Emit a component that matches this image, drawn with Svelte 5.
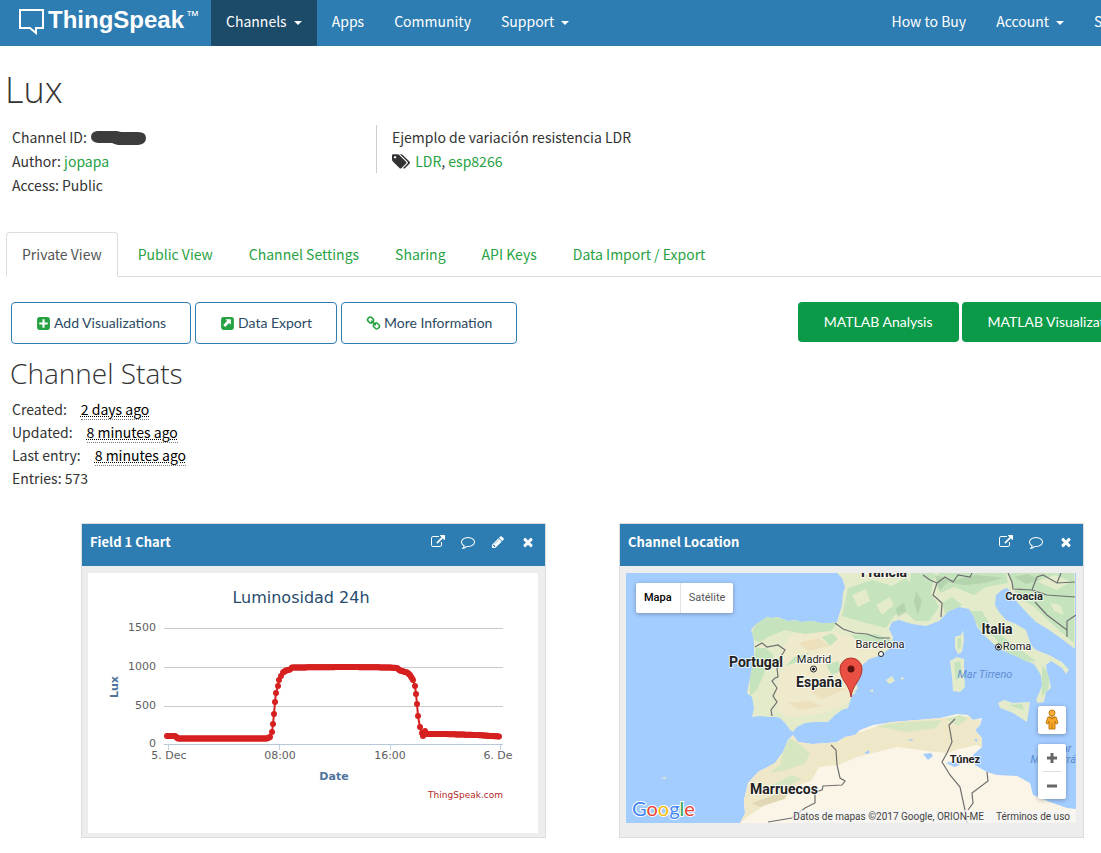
<script>
  const icons = {
    external: 'M1408 928v320q0 119-84.5 203.5t-203.5 84.5h-832q-119 0-203.5-84.5t-84.5-203.5v-832q0-119 84.5-203.5t203.5-84.5h704q14 0 23 9t9 23v64q0 14-9 23t-23 9h-704q-66 0-113 47t-47 113v832q0 66 47 113t113 47h832q66 0 113-47t47-113v-320q0-14 9-23t23-9h64q14 0 23 9t9 23zm384-864v512q0 26-19 45t-45 19-45-19l-176-176-652 652q-10 10-23 10t-23-10l-114-114q-10-10-10-23t10-23l652-652-176-176q-19-19-19-45t19-45 45-19h512q26 0 45 19t19 45z',
    comment: 'M896 384q-204 0-381.5 69.5t-282 187.5-104.5 255q0 112 71.5 213.5t201.5 175.5l87 50-27 96q-24 91-70 172 152-63 275-171l43-38 57 6q69 8 130 8 204 0 381.5-69.5t282-187.5 104.5-255-104.5-255-282-187.5-381.5-69.5zm896 512q0 174-120 321.5t-326 233-450 85.5q-70 0-145-8-198 175-460 242-49 14-114 22h-5q-15 0-27-10.5t-16-27.5v-1q-3-4-.5-12t2-10 4.5-9.5l6-9 7-8.5 8-9q7-8 31-34.5t34.5-38 31-39.5 32.5-51 27-59 26-76q-157-89-247.5-220t-90.5-281q0-174 120-321.5t326-233 450-85.5 450 85.5 326 233 120 321.5z',
    pencil: 'M491 1536l91-91-235-235-91 91v107h128v128h107zm523-928q0-22-22-22-10 0-17 7l-542 542q-7 7-7 17 0 22 22 22 10 0 17-7l542-542q7-7 7-17zm-54-192l416 416-832 832h-416v-416zm683 96q0 53-37 90l-166 166-416-416 166-165q36-38 90-38 53 0 91 38l235 234q37 39 37 91z',
    times: 'M1490 1322q0 40-28 68l-136 136q-28 28-68 28t-68-28l-294-294-294 294q-28 28-68 28t-68-28l-136-136q-28-28-28-68t28-68l294-294-294-294q-28-28-28-68t28-68l136-136q28-28 68-28t68 28l294 294 294-294q28-28 68-28t68 28l136 136q28 28 28 68t-28 68l-294 294 294 294q28 28 28 68z',
    plus: 'M1408 960v-128q0-26-19-45t-45-19h-320v-320q0-26-19-45t-45-19h-128q-26 0-45 19t-19 45v320h-320q-26 0-45 19t-19 45v128q0 26 19 45t45 19h320v320q0 26 19 45t45 19h128q26 0 45-19t19-45v-320h320q26 0 45-19t19-45zm256-544v960q0 119-84.5 203.5t-203.5 84.5h-960q-119 0-203.5-84.5t-84.5-203.5v-960q0-119 84.5-203.5t203.5-84.5h960q119 0 203.5 84.5t84.5 203.5z',
    export: 'M416 128h960a288 288 0 0 1 288 288v960a288 288 0 0 1-288 288h-960a288 288 0 0 1-288-288v-960a288 288 0 0 1 288-288zM736 384q-60 10-40 70l150 150-430 430q-30 35 0 70l170 170q35 30 70 0l430-430 150 150q60 20 70-40v-506q0-64-64-64z',
    link: 'M1520 1216q0-40-28-68l-208-208q-28-28-68-28-42 0-72 32 3 3 19 18.5t21.5 21.5 15 19 13 25.5 3.5 27.5q0 40-28 68t-68 28q-15 0-27.5-3.5t-25.5-13-19-15-21.5-21.5-18.5-19q-33 31-33 73 0 40 28 68l206 207q27 27 68 27 40 0 68-26l147-146q28-28 28-67zm-703-705q0-40-28-68l-206-207q-28-28-68-28-39 0-68 27l-147 146q-28 28-28 67 0 40 28 68l208 208q27 27 68 27 42 0 72-31-3-3-19-18.5t-21.5-21.5-15-19-13-25.5-3.5-27.5q0-40 28-68t68-28q15 0 27.5 3.5t25.5 13 19 15 21.5 21.5 18.5 19q33-31 33-73zm895 705q0 120-85 203l-147 146q-83 83-203 83-121 0-204-85l-206-207q-83-83-83-203 0-123 88-209l-88-88q-86 88-208 88-120 0-204-84l-208-208q-84-84-84-204t85-203l147-146q83-83 203-83 121 0 204 85l206 207q83 83 83 203 0 123-88 209l88 88q86-88 208-88 120 0 204 84l208 208q84 84 84 204z',
    tags: 'M448 448q0-53-37.5-90.5t-90.5-37.5-90.5 37.5-37.5 90.5 37.5 90.5 90.5 37.5 90.5-37.5 37.5-90.5zm1067 576q0 53-37 90l-491 492q-39 37-91 37-53 0-90-37l-715-716q-38-37-64.5-101t-26.5-117v-416q0-52 38-90t90-38h416q53 0 117 26.5t102 64.5l715 714q37 39 37 91zm384 0q0 53-37 90l-491 492q-39 37-91 37-36 0-59-14t-53-45l470-470q37-37 37-90 0-52-37-91l-715-714q-38-38-102-64.5t-117-26.5h224q53 0 117 26.5t102 64.5l715 714q37 39 37 91z'
  };

  const mainNav = [
    { label: 'Channels', caret: true, active: true },
    { label: 'Apps' },
    { label: 'Community' },
    { label: 'Support', caret: true }
  ];
  const sideNav = [{ label: 'How to Buy' }, { label: 'Account', caret: true }, { label: 'Sign Out' }];
  const tabs = ['Private View', 'Public View', 'Channel Settings', 'Sharing', 'API Keys', 'Data Import / Export'];
  const actions = [
    { icon: 'plus', label: 'Add Visualizations' },
    { icon: 'export', label: 'Data Export' },
    { icon: 'link', label: 'More Information' }
  ];
  const stats = [
    ['Created:', '2 days ago'],
    ['Updated:', '8 minutes ago'],
    ['Last entry:', '8 minutes ago']
  ];

  // Light curve: key points in plot units, filled in along the slow stretches.
  const curve = [
    [79, 163], [87, 163], [90, 165.5], [179, 165.5], [182, 164], [184, 159], [185, 151], [186, 141],
    [187, 129], [188, 120], [190, 113], [191, 107], [193, 103], [195, 99.5], [198, 97.5], [202, 96.5],
    [204, 94.5], [260, 94], [302, 94.5], [309, 95], [312, 97.5], [319, 99.5], [322, 102], [325, 107],
    [327, 113], [328, 121], [329, 131], [330, 143], [332, 154], [334, 160], [335, 163], [337, 158],
    [339, 161], [355, 161], [389, 162], [411, 163.5]
  ];
  const dots = [];
  curve.forEach(([x, y], i) => {
    dots.push([x, y]);
    const next = curve[i + 1];
    if (next && next[0] - x > 2) {
      for (let t = x + 1; t < next[0]; t += 1) {
        dots.push([t, y + ((next[1] - y) * (t - x)) / (next[0] - x)]);
      }
    }
  });
  const gridRows = [[1500, 55], [1000, 94], [500, 133], [0, 171]];
  const timeTicks = [['5. Dec', 80, 81], ['08:00', 191, 192], ['16:00', 302, 302], ['6. De', 412, 410]];
</script>

{#snippet icon(name, size = 14, box = '0 0 1792 1792')}
  <svg class="icon" height={size} viewBox={box} aria-hidden="true"><path fill-rule="evenodd" d={icons[name]} /></svg>
{/snippet}

{#snippet navList(items)}
  <ul class="nav">
    {#each items as item}
      <li><a href="#top" class:active={item.active}>{item.label}{#if item.caret}<span class="caret"></span>{/if}</a></li>
    {/each}
  </ul>
{/snippet}

<div class="page">
  <header class="navbar">
    <a class="brand" href="#top">
      <svg width="26" height="27" viewBox="0 0 26 27" aria-hidden="true">
        <path d="M2 2h23v18h-7v5l-6-5H2z" fill="none" stroke="#fff" stroke-width="2" />
      </svg>
      <span class="word">ThingSpeak</span><span class="tm">™</span>
    </a>
    {@render navList(mainNav)}
    <div class="push">{@render navList(sideNav)}</div>
  </header>

  <main>
    <h1>Lux</h1>
    <section class="about">
      <div class="meta">
        <p>Channel ID:<svg class="redact" width="57" height="16" viewBox="0 0 57 16" aria-hidden="true"><path d="M7 1h20l4 1h17q8 0 8 6t-8 7H28q-4-1-6-2H8Q1 12 1 7t6-6z" fill="#3c3c3c" /></svg></p>
        <p>Author: <a href="#author">jopapa</a></p>
        <p>Access: Public</p>
      </div>
      <div class="desc">
        <p>Ejemplo de variación resistencia LDR</p>
        <p class="tags">{@render icon('tags', 17, '0 0 1920 1792')}<span><a href="#ldr">LDR</a>, <a href="#esp">esp8266</a></span></p>
      </div>
    </section>

    <nav class="tabs">
      {#each tabs as tab, i}
        <a href="#tab" class:current={i === 0}>{tab}</a>
      {/each}
    </nav>

    <div class="actions">
      {#each actions as action}
        <button class="outline" type="button">{@render icon(action.icon, 15)}{action.label}</button>
      {/each}
      <div class="matlab">
        <button class="solid" type="button">MATLAB Analysis</button>
        <button class="solid" type="button">MATLAB Visualization</button>
      </div>
    </div>

    <section class="stats">
      <h2>Channel Stats</h2>
      {#each stats as [name, value]}
        <p>{name}<abbr>{value}</abbr></p>
      {/each}
      <p>Entries: 573</p>
    </section>

    <div class="panels">
      <section class="panel">
        <header>
          <h3>Field 1 Chart</h3>
          <button type="button" aria-label="Open">{@render icon('external')}</button>
          <button type="button" aria-label="Comment">{@render icon('comment')}</button>
          <button type="button" aria-label="Edit">{@render icon('pencil')}</button>
          <button type="button" aria-label="Close">{@render icon('times')}</button>
        </header>
        <div class="body">
          <svg class="chart" viewBox="0 0 450 260" role="img" aria-label="Luminosidad 24h">
            <rect width="450" height="260" fill="#fff" />
            <text class="title" x="213" y="30">Luminosidad 24h</text>
            {#each gridRows as [value, y]}
              <rect x="76" y={y} width="339" height="1" fill={value ? '#cacaca' : '#b8c8d8'} />
              <text class="tick end" x="68" y={y + 3}>{value}</text>
            {/each}
            {#each timeTicks as [label, x, cx]}
              <rect x={x} y="172" width="1" height="5" fill="#c0d0e0" />
              <text class="tick" x={cx} y="186">{label}</text>
            {/each}
            <text class="axis" x="246" y="207">Date</text>
            <text class="axis" transform="translate(30 114) rotate(-90)">Lux</text>
            <polyline points={curve.join(' ')} fill="none" stroke="#d62020" stroke-width="2" />
            {#each dots as [x, y]}
              <circle cx={x} cy={y} r="3" fill="#d62020" />
            {/each}
            <text class="credit" x="415" y="225">ThingSpeak.com</text>
          </svg>
        </div>
      </section>

      <section class="panel">
        <header>
          <h3>Channel Location</h3>
          <button type="button" aria-label="Open">{@render icon('external')}</button>
          <button type="button" aria-label="Comment">{@render icon('comment')}</button>
          <button type="button" aria-label="Close">{@render icon('times')}</button>
        </header>
        <div class="body">
          <div class="map">
            <svg viewBox="0 0 450 250" role="img" aria-label="Mapa">
              <defs>
                <clipPath id="europe">
                  <path id="mainland" d="M211 0l5 5 3 9-2 6-1 12-5 17-6 1-10 0-9-2-11 1-6-2-7 1-10-4-6 1-5-1-6 4-6 4-4 5 2 6 1 8 0 14-3 15-3 15-1 5 5 4 2 11-2 9 8-1 10 1 6 0 4 1 5 5 5 7 3 2 4-5 8-4 10-1 13 0 7-7 7-5 6-2 2-6 2-7 6-7-4-9 2-9 5-4 8-7 12-4 11-8 1-10-4-8 3-7 7-2 13 4 14 2 13-5 10-10 10-4 10 2 5 8 3 10 9 10 10 9 10 6 10 4 10 5 8 3 5 8 2 4 1 10-6 14 2 3 6-1 2-10 5-4-2-10-2-6-1-7 5-4 11 7 4 6 3-4-7-8-13-7-13-5-5-5-5-15-10-6-10-4-7-8-4-7 1-10 6-5 5-2 4 4 0 5 3 0 3 5 9 10 10 10 13 8 13 9 13 10V0z" />
                </clipPath>
                <clipPath id="africa">
                  <path d="M114 250l5-10-1-13 4-17 10-11 17-9 8-11 5-12 5-5 5 7 14 2 16-1 9-1 8-5 10-2 5-5 13-5 20-3 24-2 23-2 17-4 11 1 5 5 9-2-2 7-5 5 7 8 0 9-9 8 2 10 12 7 10 3 20 1 13 7 3 12 17 7 17 6 9 1v14z" />
                </clipPath>
              </defs>
              <rect width="450" height="250" fill="#a3ccff" />
              <g clip-path="url(#europe)">
                <rect width="450" height="250" fill="#e3ebcb" />
                <path fill="#f0eacd" d="M165 62l25-8 35 10 35 5-10 17-20 10-2 25-10 12-25 8-30 4-12-8-2-22 8-20-2-18zM135 72l8 4-6 20-5-8z" />
                <path fill="#c5e3bd" d="M126 60l5-12 12-6 20 6 20-1 28 3-6 8-26 3-20-4-15 6-10 6-8-2zM130 75l10 0 8 8-6 8-10 24-8 8 0-20zM196 64l10-4 6 6-8 7zM225 62l25-1 18 7-20 2-18-3zM168 84l16-5-10 9-14 5zM200 92l12-4 4 10-10 4z" />
                <path fill="#c5e3bd" d="M222 15l24-8 20 6 14-8 10 12-6 18-16 8-8 12-24-6-20-6zM285 0h24l-4 20 8 14-10 14-14 0-14-14 8-14zM312 0h68l2 10-22 4-12 8-20-8-14 6-4-8zM316 30l10-6 10 8-16 12zM342 38l14 0 8 14 18 16 14 10 14 10-14 2-18-12-10-14-14-8zM382 0h66v70l-14-12-26-24-18-12zM416 92l8 10-2 14-6 8z" />
                <path fill="#e3ebcb" d="M226 22l14-6 4 12-12 6zM250 32l14-8 4 8-12 10zM410 8l20-6 15 7-15 8zM424 30l10 2 4 10-10-4z" />
                <path fill="#a9c9a4" opacity=".6" d="M308 2l20 5 22-5 28 3-20 5-20 2-16-3-8 8zM290 18l6 10-4 14-4-12zM388 4l14-3 12 6-14 4zM270 36l8-7 2 10-8 5z" />
                <path fill="#ead8b3" opacity=".6" d="M172 70l20-5 12 8-22 5zM184 118l20-6 16 4-24 10zM162 130l22-2 12 5-22 4z" />
              </g>
              <g clip-path="url(#africa)">
                <rect width="450" height="250" fill="#faf5e6" />
                <path fill="#efe8c8" d="M114 250l2-42 46-48 14 8 50-6 40-14 80-5 14 8 12 5-5 20-8 0-8-4-18 4-12 4-20-2-30-4-40 10-18 8-20 2-8 14-18 6-8 12-20 6-18 12z" />
                <path fill="#d5e6c1" d="M158 175l6-10 12 8 8 8-6 10-18 6-16 3 10-8zM250 153l30-4 36-2-6 8-30 4zM320 146l14-4 8 3-10 8zM146 212l20-10 10 4-22 12z" />
                <path fill="#dfd7b5" d="M126 230l28-10 14-6-10 12-24 8z" />
                <path fill="#a3ccff" d="M297 181l8-1 2 3-5 4zM320 190l8-2 6 4-6 2zM238 180l5-3 0 4zM281 167l6-1-1 2zM348 166l3 0 0 3z" />
              </g>
              <g fill="#e3ebcb">
                <path d="M329 64l6-2 2-5 1 10-2 12-4 2-3-6zM324 88l7-4 7 2 0 16 1 12-5 5-7-1-1-14zM372 130l6-3 9 3 17-1-3 20-14-9-13-5zM243 118l4-2 0 3zM260 107l6-4 3 5-6 3zM274 104l5 1-3 2zM226 120l4-1-2 3zM34 205l6-1 0 2z" />
                <path fill="#c5e3bd" d="M331 66l4-2 0 10-3 3zM328 90l6-2 2 12-6 8zM382 132l14-1 2 6z" />
              </g>
              <g class="border">
                <path d="M129 74l7-4 5 4 11-2 7 5-5 8-3 10 1 9-3 1-3 3 5 7-4 8 4 6-6 8 1 6M209 50l8 6 12 4 12 1 11 4 12 0" />
                <path d="M297 2l7 5 7 3-4 12 9 8-1 14M311 10l8-6 8 5 5-7 12 2 2-4M382 0l4 9 1 7 19 1 5-13 6-2 14 8 18-1M406 17l15 5 28 2M409 29l12 13 20 15 0 7M450 42l-9 6 0 9M431 10l4-10" />
                <path d="M205 172l5 5 1 15 3 13 5 3-3 4-19 1-1 4-7 2 0 11-10 5-13 10-24 4M329 146l-6 6 3 17-5 11-5 9 8 13 10 12 5 23 2 13M361 199l1 9-16 12 1 10-5 7" />
              </g>
              <g class="places">
                <text class="big" x="258" y="4">Francia</text>
                <text class="mid" x="398" y="27">Croacia</text>
                <text class="big" x="371" y="61">Italia</text>
                <text class="big" x="130" y="94">Portugal</text>
                <text class="big" x="193" y="114">España</text>
                <text class="big" x="158" y="221">Marruecos</text>
                <text class="mid" x="339" y="190">Túnez</text>
                <text x="188" y="90">Madrid</text>
                <text x="254" y="75">Barcelona</text>
                <text x="391" y="77">Roma</text>
              </g>
              <g class="sea">
                <text x="359" y="105">Mar Tirreno</text>
                <text x="436" y="179">Mar</text>
                <text x="436" y="190">Mediterráneo</text>
              </g>
              <g fill="#fff" stroke="#222">
                <circle cx="187.500" cy="96" r="3" /><circle cx="372.500" cy="74" r="3" /><circle cx="255" cy="81" r="2.500" />
              </g>
              <circle cx="187.500" cy="96" r="1.500" /><circle cx="372.500" cy="74" r="1.500" />
              <path d="M225 124C224 112 214 107 214 96a11 11 0 0 1 22 0c0 11-10 16-11 28z" fill="#ea4f43" stroke="#b33128" />
              <circle cx="225" cy="96" r="3.500" fill="#5c120d" />
              <text class="google" x="6" y="243"><tspan fill="#4285f4">G</tspan><tspan fill="#ea4335">o</tspan><tspan fill="#fbbc05">o</tspan><tspan fill="#4285f4">g</tspan><tspan fill="#34a853">l</tspan><tspan fill="#ea4335">e</tspan></text>
            </svg>
            <div class="types">
              <button type="button" class="on">Mapa</button><button type="button">Satélite</button>
            </div>
            <div class="controls">
              <button type="button" class="peg" aria-label="Street View">
                <svg width="14" height="22" viewBox="0 0 14 22" aria-hidden="true">
                  <path d="M3 8h8l2 6-2 1-1-3v8H4v-8l-1 3-2-1z" fill="#f9a825" stroke="#c07a10" />
                  <circle cx="7" cy="4" r="3" fill="#fbb03b" stroke="#c07a10" /><path d="M7 14v6M4 8l3 2 3-2" stroke="#c07a10" fill="none" />
                </svg>
              </button>
              <div class="zoom">
                <button type="button" aria-label="Zoom in"><svg width="12" height="12" aria-hidden="true"><path d="M6 1v10M1 6h10" stroke="#666" stroke-width="3" /></svg></button>
                <button type="button" aria-label="Zoom out"><svg width="12" height="12" aria-hidden="true"><path d="M1 6h10" stroke="#666" stroke-width="3" /></svg></button>
              </div>
            </div>
            <div class="legal"><span>Datos de mapas ©2017 Google, ORION-ME</span><a href="#terms">Términos de uso</a></div>
          </div>
        </div>
      </section>
    </div>
  </main>
</div>

<style>
  :global(body) {
    margin: 0;
    overflow-x: hidden;
    background: #fff;
  }
  .page {
    min-width: 1165px;
    color: #333;
    font: 14px/24px 'Noto Sans CJK SC', 'Noto Sans', sans-serif;
  }
  p, h1, h2, h3, ul { margin: 0; padding: 0; }
  a { color: #27a243; text-decoration: none; }
  button { margin: 0; cursor: pointer; }
  .icon { display: block; fill: currentColor; flex: none; }

  .navbar {
    display: flex;
    height: 46px;
    background: #2e7db2;
  }
  .brand {
    box-sizing: border-box;
    display: flex;
    width: 211px;
    padding: 8px 0 0 18px;
    color: #fff;
    font-family: 'Liberation Sans', sans-serif;
  }
  .word { margin-left: 4px; font-size: 24px; font-weight: bold; }
  .tm { margin-left: 2px; font-size: 13px; line-height: 16px; }
  .nav { display: flex; list-style: none; }
  .nav a {
    display: flex;
    align-items: center;
    padding: 0 15px 4px;
    color: #fff;
    line-height: 42px;
  }
  .nav a.active { background: #1c4b69; }
  .push { margin-left: auto; }
  .caret {
    margin: 3px 0 0 7px;
    border: 4px solid transparent;
    border-top-color: #fff;
    border-bottom: 0;
  }

  h1, h2 { font-family: 'Open Sans', sans-serif; font-weight: 300; }
  h1 { padding: 22px 5px 0; font-size: 36px; line-height: 44px; }
  .about { display: flex; padding: 13px 12px 0; }
  .meta { width: 364px; }
  .redact { margin-left: 3px; vertical-align: -3px; }
  .desc { align-self: flex-start; padding-left: 15px; border-left: 1px solid #ccc; }
  .tags { display: flex; align-items: center; gap: 5px; }

  .tabs {
    display: flex;
    gap: 4px;
    margin: 35px 0 0 6px;
    border-bottom: 1px solid #ddd;
  }
  .tabs a {
    padding: 9px 15px 10px;
    margin-bottom: -1px;
    border: 1px solid transparent;
    border-radius: 4px 4px 0 0;
  }
  .tabs .current { color: #555; background: #fff; border-color: #ddd #ddd #fff; }

  .actions { display: flex; align-items: flex-start; gap: 4px; padding: 25px 15px 0 11px; }
  .actions button {
    display: flex;
    align-items: center;
    gap: 3px;
    height: 40px;
    padding: 0 26px;
    border: 0;
    border-radius: 4px;
    font: 14px/20px Lato, sans-serif;
  }
  .actions .outline { height: 42px; padding: 0 24px; border: 1px solid #2e7db2; background: #fff; color: #2b4a63; }
  .outline .icon { color: #27a243; }
  .actions .solid { background: #0a9a48; color: #fff; }
  .matlab { display: flex; gap: 3px; margin-left: auto; }

  .stats { padding: 12px 12px 0; line-height: 23px; }
  h2 { margin: 0 0 8px -2px; font-size: 28px; line-height: 34px; }
  abbr {
    margin-left: 14px;
    color: #000;
    border-bottom: 1px dotted #777;
    text-decoration: underline dotted 1px;
  }

  .panels { display: flex; justify-content: center; gap: 73px; padding: 33px 0 15px; }
  .panel {
    display: flex;
    flex-direction: column;
    flex: 0 1 463px;
    border: 1px solid #ddd;
    background: #ededed;
  }
  .panel header {
    display: flex;
    align-items: flex-start;
    box-sizing: border-box;
    height: 42px;
    padding: 6px 10px 0 8px;
    background: #2e7db2;
    color: #fff;
  }
  h3 { flex: 1; font: bold 13px/24px 'Noto Sans CJK SC', sans-serif; }
  .panel header button { padding: 5px 0 0 16px; border: 0; background: none; color: #fff; }
  .body { padding: 7px 7px 4px 6px; }
  .chart { display: block; font-family: 'DejaVu Sans', sans-serif; text-anchor: middle; }
  .title { font-size: 16px; fill: #274b6d; }
  .tick { font-size: 11px; fill: #606060; }
  .end { text-anchor: end; }
  .axis { font-size: 11px; font-weight: bold; fill: #4d759e; }
  .credit { font-size: 9px; fill: #b51f1f; text-anchor: end; }

  .map { position: relative; font: 11px/14px Roboto, sans-serif; }
  .map > svg { display: block; text-anchor: middle; }
  .border { fill: none; stroke: #707070; stroke-width: 1.2; }
  .places text { fill: #222; stroke: #fff; stroke-width: 2; stroke-opacity: 0.7; paint-order: stroke; }
  .places .big { font-size: 14px; font-weight: bold; }
  .places .mid { font-weight: bold; }
  .sea { fill: #5f8fd0; font-style: italic; }
  .google {
    font: 20px Lato, sans-serif;
    text-anchor: start;
    stroke: #fff;
    stroke-width: 2;
    paint-order: stroke;
  }
  .map button { padding: 0; border: 0; background: #fff; color: #565656; font: inherit; }
  .types {
    position: absolute;
    top: 10px;
    left: 10px;
    display: flex;
    border-radius: 2px;
    overflow: hidden;
    box-shadow: 0 1px 4px rgba(0, 0, 0, 0.3);
  }
  .types button { height: 30px; padding: 0 8px; }
  .types .on { color: #000; font-weight: 500; border-right: 1px solid #e3e3e3; }
  .controls { position: absolute; right: 10px; bottom: 24px; display: grid; gap: 10px; width: 28px; }
  .controls .peg, .zoom { border-radius: 2px; box-shadow: 0 1px 4px rgba(0, 0, 0, 0.3); }
  .controls .peg { display: grid; place-items: center; height: 28px; }
  .zoom { display: grid; background: #fff; }
  .zoom button { display: grid; place-items: center; height: 27px; margin: 0 5px; }
  .zoom button + button { border-top: 1px solid #e0e0e0; height: 28px; }
  .legal {
    position: absolute;
    right: 0;
    bottom: 0;
    display: flex;
    gap: 12px;
    padding: 0 6px 0 1px;
    background: rgba(245, 245, 245, 0.7);
    color: #444;
    font-size: 10px;
    line-height: 13px;
  }
  .legal a { color: #444; }
</style>
